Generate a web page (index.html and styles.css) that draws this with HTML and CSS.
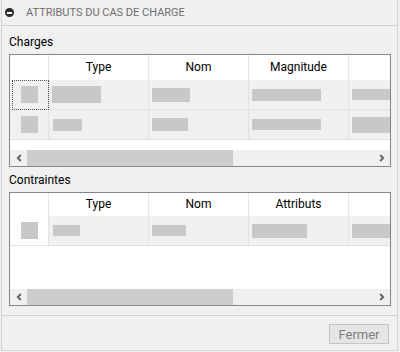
FILE: index.html
```html
<!DOCTYPE html>
<html>
<head>
  <title>Attributs du cas de charge</title>
  <link rel="stylesheet" href="styles.css">
</head>
<body>
  <div class="dialog">
    <div class="titlebar">
      <span class="collapse"></span>
      <span class="title">ATTRIBUTS DU CAS DE CHARGE</span>
    </div>

    <div class="content">
      <div class="label">Charges</div>
      <div class="grid grid-charges">
        <div class="row head">
          <div class="cell c0"></div>
          <div class="cell">Type</div>
          <div class="cell">Nom</div>
          <div class="cell">Magnitude</div>
          <div class="cell"></div>
        </div>
        <div class="row data">
          <div class="cell c0 focus"><span class="box"></span></div>
          <div class="cell"><span class="bar" style="width:49px;height:17px"></span></div>
          <div class="cell"><span class="bar" style="width:38px;height:14px"></span></div>
          <div class="cell"><span class="bar" style="width:69px;height:12px"></span></div>
          <div class="cell"><span class="bar" style="width:60px;height:11px"></span></div>
        </div>
        <div class="row data">
          <div class="cell c0"><span class="box"></span></div>
          <div class="cell"><span class="bar bar-in" style="width:29px;height:12px"></span></div>
          <div class="cell"><span class="bar" style="width:36px;height:13px"></span></div>
          <div class="cell"><span class="bar" style="width:69px;height:11px"></span></div>
          <div class="cell"><span class="bar" style="width:60px;height:16px"></span></div>
        </div>
        <div class="spacer"></div>
        <div class="hscroll">
          <span class="arrow"><svg width="16" height="16" viewBox="0 0 16 16"><path d="M9.8 5 L6.8 8 L9.8 11" fill="none" stroke="#5f5f5f" stroke-width="1.8"/></svg></span>
          <span class="thumb"></span>
          <span class="track"></span>
          <span class="arrow"><svg width="16" height="16" viewBox="0 0 16 16"><path d="M6.2 5 L9.2 8 L6.2 11" fill="none" stroke="#5f5f5f" stroke-width="1.8"/></svg></span>
        </div>
      </div>

      <div class="label label-next">Contraintes</div>
      <div class="grid grid-constraints">
        <div class="row head head-sm">
          <div class="cell c0"></div>
          <div class="cell">Type</div>
          <div class="cell">Nom</div>
          <div class="cell">Attributs</div>
          <div class="cell"></div>
        </div>
        <div class="row data">
          <div class="cell c0 plain"><span class="box"></span></div>
          <div class="cell"><span class="bar bar-in" style="width:27px;height:11px"></span></div>
          <div class="cell"><span class="bar" style="width:34px;height:11px"></span></div>
          <div class="cell"><span class="bar" style="width:55px;height:14px"></span></div>
          <div class="cell"><span class="bar" style="width:60px;height:14px"></span></div>
        </div>
        <div class="spacer"></div>
        <div class="hscroll">
          <span class="arrow"><svg width="16" height="16" viewBox="0 0 16 16"><path d="M9.8 5 L6.8 8 L9.8 11" fill="none" stroke="#5f5f5f" stroke-width="1.8"/></svg></span>
          <span class="thumb"></span>
          <span class="track"></span>
          <span class="arrow"><svg width="16" height="16" viewBox="0 0 16 16"><path d="M6.2 5 L9.2 8 L6.2 11" fill="none" stroke="#5f5f5f" stroke-width="1.8"/></svg></span>
        </div>
      </div>
    </div>

    <div class="footer">
      <button class="btn" disabled>Fermer</button>
    </div>
  </div>
</body>
</html>
```

FILE: styles.css
```css
body {
  margin: 0;
  background: #f0f0f0;
  color: #000;
  font-family: Roboto, "Liberation Sans", sans-serif;
  font-size: 12px;
}

.dialog {
  box-sizing: border-box;
  width: 397px;
  height: 351px;
  margin-left: 1px;
  border: 1px solid #d4d4d4;
  border-top: none;
  display: flex;
  flex-direction: column;
}

/* title bar */
.titlebar {
  height: 25px;
  flex: none;
  border-bottom: 1px solid #d0d0d0;
  display: flex;
  align-items: center;
  padding-left: 3px;
  gap: 12px;
}

.collapse {
  width: 9px;
  height: 9px;
  border-radius: 50%;
  background: #2b2b2b;
  display: flex;
  align-items: center;
  justify-content: center;
}

.collapse::after {
  content: "";
  width: 5px;
  height: 2px;
  background: #fff;
}

.title {
  color: #6e6e6e;
  font-size: 11px;
}

/* content */
.content {
  flex: 1;
  padding: 8px 6px 0 7px;
}

.label {
  line-height: 16px;
  margin-bottom: 4px;
}

.label-next { margin-top: 5px; }

.grid {
  box-sizing: border-box;
  border: 1px solid #828790;
  background: #fff;
  display: flex;
  flex-direction: column;
  overflow: hidden;
}

.grid-charges { height: 113px; }
.grid-constraints { height: 114px; }

.row {
  display: flex;
  flex: none;
}

.cell {
  flex: none;
  box-sizing: border-box;
  width: 100px;
  display: flex;
  align-items: center;
  padding-left: 3px;
  border-right: 1px solid #e5e5e5;
}

.c0 {
  width: 39px;
  padding: 0;
  justify-content: center;
}

.head { height: 25px; }
.head-sm { height: 23px; }

.head .cell {
  justify-content: center;
  padding: 0 0 2px;
}

.data {
  box-sizing: border-box;
  height: 30px;
  background: #f0f0f0;
  border-bottom: 1px solid #e2e2e2;
}

.data .cell { border-right-color: #e2e2e2; }

.plain { background: #fff; }

.focus { position: relative; }

.focus::before {
  content: "";
  position: absolute;
  top: 0;
  bottom: -1px;
  left: 2px;
  right: -1px;
  border: 1px dotted #555;
}

.box {
  width: 17px;
  height: 17px;
  background: #c8c8c8;
}

.bar {
  flex: none;
  background: #c8c8c8;
}

.bar-in { margin-left: 1px; }

.spacer { flex: 1; }

/* horizontal scrollbar */
.hscroll {
  height: 16px;
  flex: none;
  display: flex;
  background: #f0f0f0;
}

.arrow {
  width: 17px;
  display: flex;
  align-items: center;
  justify-content: center;
}

.thumb {
  width: 206px;
  background: #cdcdcd;
}

.track { flex: 1; }

/* footer */
.footer {
  height: 35px;
  flex: none;
  border-top: 1px solid #d0d0d0;
  display: flex;
  justify-content: flex-end;
  align-items: flex-start;
  padding: 8px 8px 0 0;
  box-sizing: border-box;
}

.btn {
  width: 60px;
  height: 20px;
  padding: 0;
  border: 1px solid #c4c4c4;
  background: #e5e5e5;
  color: #7d7d7d;
  font-family: Roboto, "Liberation Sans", sans-serif;
  font-size: 13px;
}
```
